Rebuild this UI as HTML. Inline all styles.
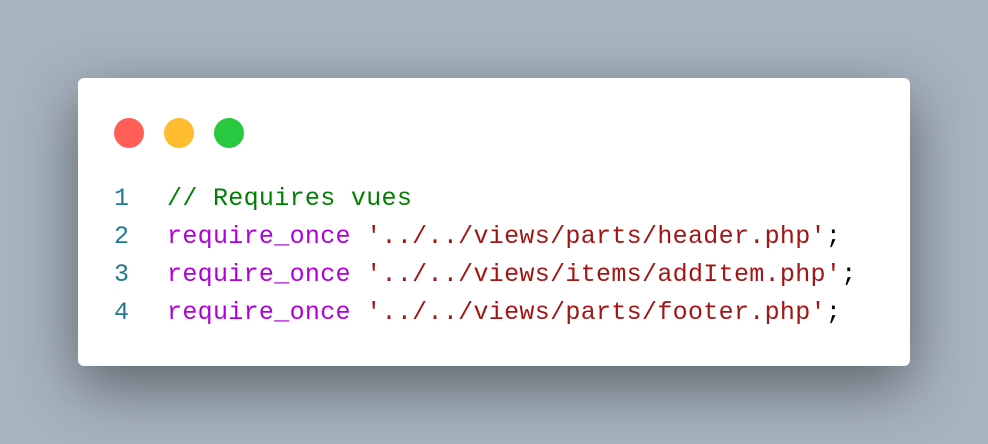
<!DOCTYPE html>
<html><head><style>
body{margin:0;width:988px;height:444px;background:#a7b3bf;overflow:hidden;position:relative;font-family:"Liberation Mono",monospace}
.card{position:absolute;left:78px;top:78px;width:832px;height:288px;background:#fff;border-radius:6px;box-shadow:0 20px 60px rgba(0,0,0,0.45)}
.dot{position:absolute;top:40px;width:30px;height:30px;border-radius:50%}
.l{position:absolute;left:0;font-size:25px;letter-spacing:0.32px;white-space:pre;line-height:30px}
.n{position:absolute;left:36px;color:#237893}
.c{position:absolute;left:89px}
.cm{color:#008000}.k{color:#af00db}.s{color:#a31515}
</style></head><body>
<div class="card">
<div class="dot" style="left:36px;background:#ff5f57"></div>
<div class="dot" style="left:86px;background:#febc2e"></div>
<div class="dot" style="left:136px;background:#28c840"></div>
<div class="l" style="top:106px"><span class="n">1</span><span class="c cm">// Requires vues</span></div>
<div class="l" style="top:144px"><span class="n">2</span><span class="c"><span class="k">require_once</span> <span class="s">'../../views/parts/header.php'</span>;</span></div>
<div class="l" style="top:182px"><span class="n">3</span><span class="c"><span class="k">require_once</span> <span class="s">'../../views/items/addItem.php'</span>;</span></div>
<div class="l" style="top:220px"><span class="n">4</span><span class="c"><span class="k">require_once</span> <span class="s">'../../views/parts/footer.php'</span>;</span></div>
</div>
</body></html>
